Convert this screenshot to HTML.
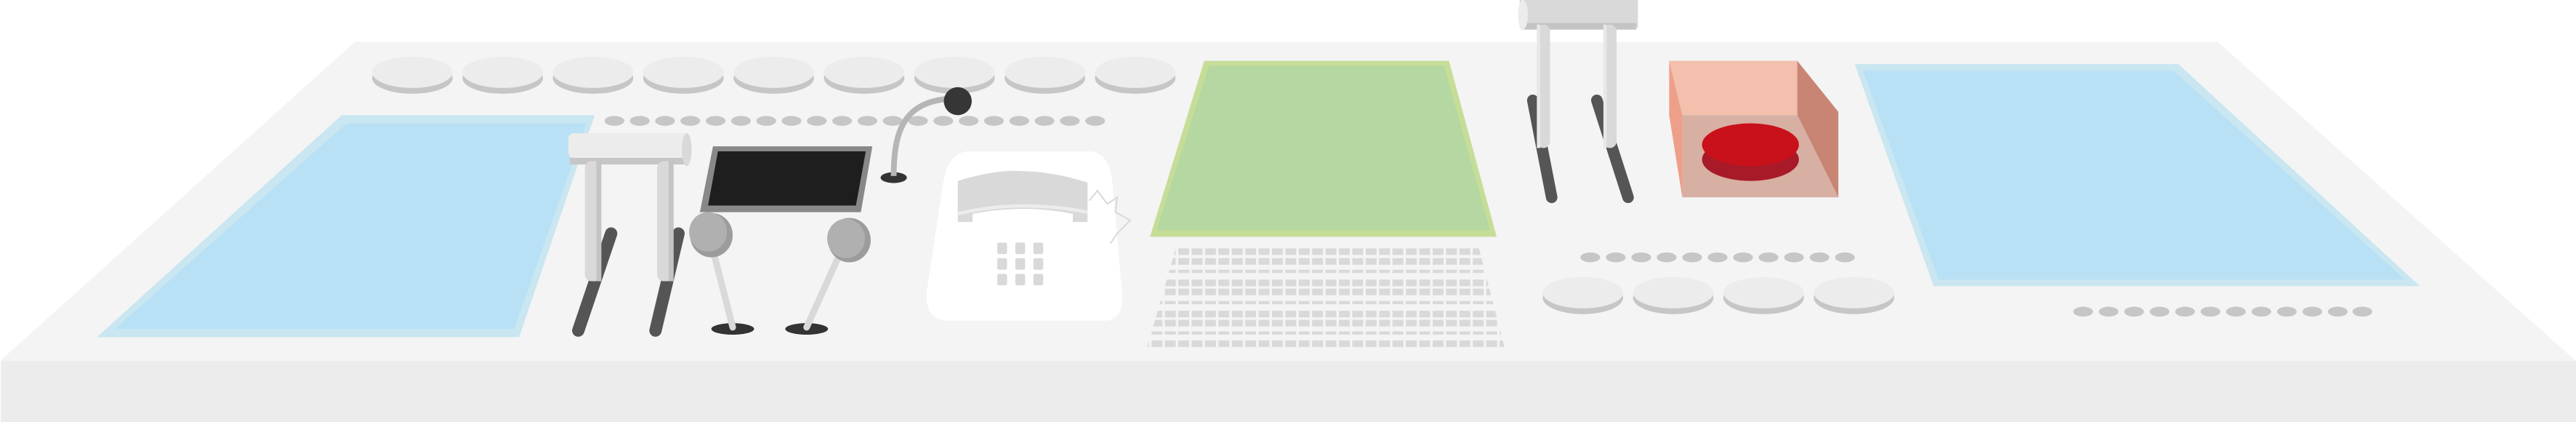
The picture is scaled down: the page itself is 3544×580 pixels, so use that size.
<!DOCTYPE html>
<html><head><meta charset="utf-8"><style>html,body{margin:0;padding:0;background:#fff;overflow:hidden}svg{display:block}</style></head>
<body>
<svg width="3544" height="580" viewBox="0 0 1568 256.6" preserveAspectRatio="none" xmlns="http://www.w3.org/2000/svg">
<defs>
<pattern id="k" patternUnits="userSpaceOnUse" width="8.15" height="20" x="0" y="0"><rect x="0" y="0" width="6.6" height="20" fill="#d9d9d9"/></pattern>
<clipPath id="kb"><polygon points="716,150 900,150 916,212 698,212"/></clipPath>
</defs>
<rect width="1568" height="256.6" fill="#fff"/>
<polygon points="216,25.5 1350,25.5 1568,219.5 0,219.5" fill="#f4f4f4"/>
<rect x="0.5" y="219.5" width="1567.5" height="37.1" fill="#ececec"/>
<polygon points="208,70 362,70 316,205 59,205" fill="#c9e6f1"/>
<polygon points="211,75 357,75 313,200 70,200" fill="#b9e1f5"/>
<polygon points="1129,39 1326,39 1473,174 1177,174" fill="#c9e6f1"/>
<polygon points="1134,43 1323,43 1464,170 1180,170" fill="#b9e1f5"/>
<polygon points="733,37 882,37 911,144 700,144" fill="#c6dd98"/>
<polygon points="736,40 879,40 907,140 704,140" fill="#b5d7a2"/>
<g>
<g fill="#c6c6c6"><ellipse cx="251" cy="47.5" rx="24.5" ry="9.5"/><ellipse cx="306" cy="47.5" rx="24.5" ry="9.5"/><ellipse cx="361" cy="47.5" rx="24.5" ry="9.5"/><ellipse cx="416" cy="47.5" rx="24.5" ry="9.5"/><ellipse cx="471" cy="47.5" rx="24.5" ry="9.5"/><ellipse cx="526" cy="47.5" rx="24.5" ry="9.5"/><ellipse cx="581" cy="47.5" rx="24.5" ry="9.5"/><ellipse cx="636" cy="47.5" rx="24.5" ry="9.5"/><ellipse cx="691" cy="47.5" rx="24.5" ry="9.5"/></g>
<g fill="#ececec"><ellipse cx="251" cy="44" rx="24.5" ry="9.5"/><ellipse cx="306" cy="44" rx="24.5" ry="9.5"/><ellipse cx="361" cy="44" rx="24.5" ry="9.5"/><ellipse cx="416" cy="44" rx="24.5" ry="9.5"/><ellipse cx="471" cy="44" rx="24.5" ry="9.5"/><ellipse cx="526" cy="44" rx="24.5" ry="9.5"/><ellipse cx="581" cy="44" rx="24.5" ry="9.5"/><ellipse cx="636" cy="44" rx="24.5" ry="9.5"/><ellipse cx="691" cy="44" rx="24.5" ry="9.5"/></g>
</g>
<g fill="#c6c6c6">
<ellipse cx="374" cy="73.5" rx="6" ry="3"/><ellipse cx="389.4" cy="73.5" rx="6" ry="3"/><ellipse cx="404.8" cy="73.5" rx="6" ry="3"/><ellipse cx="420.2" cy="73.5" rx="6" ry="3"/><ellipse cx="435.6" cy="73.5" rx="6" ry="3"/><ellipse cx="451" cy="73.5" rx="6" ry="3"/><ellipse cx="466.4" cy="73.5" rx="6" ry="3"/><ellipse cx="481.8" cy="73.5" rx="6" ry="3"/><ellipse cx="497.2" cy="73.5" rx="6" ry="3"/><ellipse cx="512.6" cy="73.5" rx="6" ry="3"/><ellipse cx="528" cy="73.5" rx="6" ry="3"/><ellipse cx="543.4" cy="73.5" rx="6" ry="3"/><ellipse cx="558.8" cy="73.5" rx="6" ry="3"/><ellipse cx="574.2" cy="73.5" rx="6" ry="3"/><ellipse cx="589.6" cy="73.5" rx="6" ry="3"/><ellipse cx="605" cy="73.5" rx="6" ry="3"/><ellipse cx="620.4" cy="73.5" rx="6" ry="3"/><ellipse cx="635.8" cy="73.5" rx="6" ry="3"/><ellipse cx="651.2" cy="73.5" rx="6" ry="3"/><ellipse cx="666.6" cy="73.5" rx="6" ry="3"/>
<ellipse cx="968" cy="156.5" rx="6" ry="3"/><ellipse cx="983.5" cy="156.5" rx="6" ry="3"/><ellipse cx="999" cy="156.5" rx="6" ry="3"/><ellipse cx="1014.5" cy="156.5" rx="6" ry="3"/><ellipse cx="1030" cy="156.5" rx="6" ry="3"/><ellipse cx="1045.5" cy="156.5" rx="6" ry="3"/><ellipse cx="1061" cy="156.5" rx="6" ry="3"/><ellipse cx="1076.5" cy="156.5" rx="6" ry="3"/><ellipse cx="1092" cy="156.5" rx="6" ry="3"/><ellipse cx="1107.5" cy="156.5" rx="6" ry="3"/><ellipse cx="1123" cy="156.5" rx="6" ry="3"/>
<ellipse cx="1268" cy="189.5" rx="6" ry="3"/><ellipse cx="1283.5" cy="189.5" rx="6" ry="3"/><ellipse cx="1299" cy="189.5" rx="6" ry="3"/><ellipse cx="1314.5" cy="189.5" rx="6" ry="3"/><ellipse cx="1330" cy="189.5" rx="6" ry="3"/><ellipse cx="1345.5" cy="189.5" rx="6" ry="3"/><ellipse cx="1361" cy="189.5" rx="6" ry="3"/><ellipse cx="1376.5" cy="189.5" rx="6" ry="3"/><ellipse cx="1392" cy="189.5" rx="6" ry="3"/><ellipse cx="1407.5" cy="189.5" rx="6" ry="3"/><ellipse cx="1423" cy="189.5" rx="6" ry="3"/><ellipse cx="1438" cy="189.5" rx="6" ry="3"/>
</g>
<g fill="#c6c6c6"><ellipse cx="963.5" cy="181" rx="24.5" ry="10"/><ellipse cx="1018.5" cy="181" rx="24.5" ry="10"/><ellipse cx="1073.5" cy="181" rx="24.5" ry="10"/><ellipse cx="1128.5" cy="181" rx="24.5" ry="10"/></g>
<g fill="#ececec"><ellipse cx="963.5" cy="178" rx="24.5" ry="9.5"/><ellipse cx="1018.5" cy="178" rx="24.5" ry="9.5"/><ellipse cx="1073.5" cy="178" rx="24.5" ry="9.5"/><ellipse cx="1128.5" cy="178" rx="24.5" ry="9.5"/></g>
<!-- left stand -->
<g stroke="#555" stroke-width="7.5" stroke-linecap="round">
<line x1="372" y1="142" x2="352" y2="201"/>
<line x1="413" y1="142" x2="399" y2="201"/>
</g>
<rect x="346" y="81" width="74" height="15" rx="3" fill="#ececec"/>
<rect x="347" y="96" width="72" height="4" fill="#c6c6c6"/>
<ellipse cx="418" cy="91" rx="3" ry="10" fill="#d9d9d9"/>
<rect x="356" y="98" width="10" height="73" rx="4" fill="#d9d9d9"/><rect x="363" y="98" width="3" height="73" fill="#c4c4c4"/>
<rect x="400" y="98" width="10" height="73" rx="4" fill="#d9d9d9"/><rect x="407" y="98" width="3" height="73" fill="#c4c4c4"/>
<polygon points="434,89 531,89 524,129 426,129" fill="#888"/>
<polygon points="437,92 527,92 521,125 431,125" fill="#1e1e1e"/>
<ellipse cx="446" cy="200" rx="13" ry="3.5" fill="#333"/>
<line x1="434" y1="152" x2="446" y2="199" stroke="#d9d9d9" stroke-width="4" stroke-linecap="round"/>
<ellipse cx="433" cy="143" rx="13" ry="13.5" fill="#9c9c9c"/><ellipse cx="431" cy="141" rx="11.5" ry="12" fill="#b0b0b0"/>
<ellipse cx="491" cy="200" rx="13" ry="3.5" fill="#333"/>
<line x1="510" y1="157" x2="491" y2="199" stroke="#d9d9d9" stroke-width="4" stroke-linecap="round"/>
<ellipse cx="517" cy="146" rx="13" ry="13.5" fill="#9c9c9c"/><ellipse cx="515" cy="145" rx="11.5" ry="12" fill="#b0b0b0"/>
<ellipse cx="544" cy="108" rx="8" ry="3.3" fill="#333"/>
<path d="M544,107 C544,80 550,62 578,60" stroke="#b5b5b5" stroke-width="3.5" fill="none"/>
<ellipse cx="583" cy="61.5" rx="8.5" ry="8.5" fill="#363636"/>
<path d="M590,92 L662,92 Q675,92 677,110 L683,178 Q684,195 672,195 L578,195 Q563,195 564,178 L574,112 Q577,92 590,92Z" fill="#fff"/>
<path d="M583,110 Q606,103 621,104 Q640,104 662,111 L662,135 L653,135 L653,130 Q623,124 592,130 L592,135 L583,135Z" fill="#d9d9d9"/>
<path d="M583,130 Q620,121 662,129" stroke="#ececec" stroke-width="2" fill="none"/>
<path d="M663,122 L668,116 L674,124 L680,120 L679,129 L688,134 L680,142 L676,148" stroke="#d9d9d9" stroke-width="0.9" fill="none"/>
<g fill="#d9d9d9"><rect x="607" y="147.5" width="6" height="7" rx="1"/><rect x="618" y="147.5" width="6" height="7" rx="1"/><rect x="629" y="147.5" width="6" height="7" rx="1"/><rect x="607" y="157" width="6" height="7" rx="1"/><rect x="618" y="157" width="6" height="7" rx="1"/><rect x="629" y="157" width="6" height="7" rx="1"/><rect x="607" y="166.5" width="6" height="7" rx="1"/><rect x="618" y="166.5" width="6" height="7" rx="1"/><rect x="629" y="166.5" width="6" height="7" rx="1"/></g>
<g clip-path="url(#kb)" fill="url(#k)">
<rect x="690" y="151" width="240" height="4"/>
<rect x="690" y="157" width="240" height="4"/>
<rect x="690" y="164" width="240" height="2"/>
<rect x="690" y="170" width="240" height="4"/>
<rect x="690" y="175.5" width="240" height="4"/>
<rect x="690" y="183" width="240" height="2"/>
<rect x="690" y="189" width="240" height="4"/>
<rect x="690" y="194.5" width="240" height="4"/>
<rect x="690" y="201.5" width="240" height="2"/>
<rect x="690" y="207" width="240" height="4"/>
</g>
<!-- right stand -->
<g stroke="#555" stroke-width="7" stroke-linecap="round">
<line x1="933" y1="61" x2="944.5" y2="120"/>
<line x1="972" y1="61" x2="991" y2="120"/>
</g>
<rect x="925" y="0" width="72" height="17" fill="#d9d9d9"/>
<rect x="926" y="14" width="70" height="4" fill="#c4c4c4"/>
<ellipse cx="927" cy="9" rx="3" ry="9" fill="#ececec"/>
<rect x="935.5" y="15" width="8" height="75" rx="4" fill="#d9d9d9"/><rect x="935.5" y="15" width="2" height="75" fill="#e8e8e8"/>
<rect x="976" y="15" width="8" height="75" rx="4" fill="#d9d9d9"/><rect x="976" y="15" width="2" height="75" fill="#e8e8e8"/>
<polygon points="1016,37 1094,37 1094,70 1024,70" fill="#f2c0ac"/>
<polygon points="1016,37 1024,70 1024,120 1016,70" fill="#ee9f8a"/>
<polygon points="1094,37 1119,68 1119,120 1094,70" fill="#c98574"/>
<polygon points="1024,70 1094,70 1119,120 1024,120" fill="#d8afa3"/>
<ellipse cx="1065.5" cy="97" rx="29.5" ry="13" fill="#a81a28"/>
<ellipse cx="1065.5" cy="88" rx="29.5" ry="13" fill="#c8111a"/>
</svg>
</body></html>
